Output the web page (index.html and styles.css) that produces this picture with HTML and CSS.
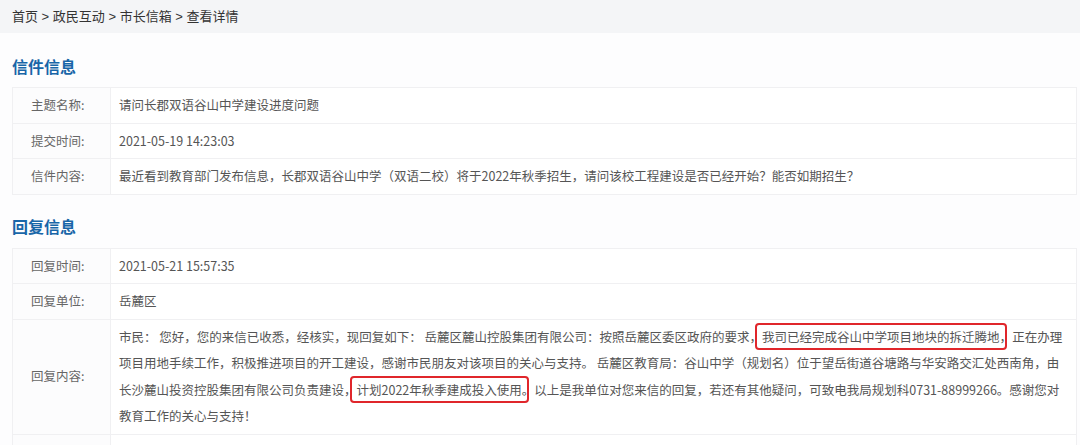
FILE: index.html
```html
<!DOCTYPE html>
<html lang="zh-CN">
<head>
<meta charset="utf-8">
<title>查看详情</title>
<link rel="stylesheet" href="styles.css">
</head>
<body>
<nav class="crumbs">首页 &gt; 政民互动 &gt; 市长信箱 &gt; 查看详情</nav>
<main class="main">
  <h2 class="sec-title">信件信息</h2>
  <table class="info">
    <tr><th>主题名称:</th><td>请问长郡双语谷山中学建设进度问题</td></tr>
    <tr><th>提交时间:</th><td>2021-05-19 14:23:03</td></tr>
    <tr><th>信件内容:</th><td>最近看到教育部门发布信息，长郡双语谷山中学（双语二校）将于2022年秋季招生，请问该校工程建设是否已经开始？能否如期招生？</td></tr>
  </table>
  <h2 class="sec-title">回复信息</h2>
  <table class="info">
    <tr><th>回复时间:</th><td>2021-05-21 15:57:35</td></tr>
    <tr><th>回复单位:</th><td>岳麓区</td></tr>
    <tr><th>回复内容:</th><td><div class="reply">市民： 您好，您的来信已收悉，经核实，现回复如下： 岳麓区麓山控股集团有限公司：按照岳麓区委区政府的要求，<span class="mark">我司已经完成谷山中学项目地块的拆迁腾地，</span>正在办理项目用地手续工作，积极推进项目的开工建设，感谢市民朋友对该项目的关心与支持。 岳麓区教育局：谷山中学（规划名）位于望岳街道谷塘路与华安路交汇处西南角，由长沙麓山投资控股集团有限公司负责建设，<span class="mark">计划2022年秋季建成投入使用。</span>以上是我单位对您来信的回复，若还有其他疑问，可致电我局规划科0731-88999266。感谢您对教育工作的关心与支持！</div></td></tr>
    <tr class="blank"><th></th><td></td></tr>
  </table>
</main>
</body>
</html>
```
FILE: styles.css
```css
* { box-sizing: border-box; }
html, body { margin: 0; padding: 0; }
body {
  background: #fdfdfe;
  font-family: "Noto Sans CJK SC", "Liberation Sans", sans-serif;
  color: #555;
  overflow: hidden;
}
.crumbs {
  height: 33px;
  line-height: 33px;
  padding-left: 12px;
  background: #f4f5f7;
  font-family: "Liberation Sans", "Noto Sans CJK SC", sans-serif;
  font-size: 13px;
  color: #333;
}
.main {
  padding: 0 3px 0 12px;
}
.sec-title {
  margin: 22px 0 10px;
  font-size: 16px;
  line-height: 22px;
  font-weight: bold;
  color: #1966a8;
}
.info + .sec-title {
  margin: 20px 0 11px;
}
.info {
  width: 100%;
  border-collapse: collapse;
  font-size: 12.5px;
  line-height: 26.5px;
}
.info th, .info td {
  border: 1px solid #f0f0f2;
  padding: 4px 8px;
  vertical-align: middle;
  text-align: left;
}
.info th {
  width: 98px;
  padding-left: 18px;
  font-weight: normal;
  color: #666;
  background: #fcfcfd;
}
.info td {
  color: #555;
  background: #fff;
}
.reply {
  width: 946px;
}
.mark {
  position: relative;
}
.mark::after {
  content: "";
  position: absolute;
  left: -7px;
  right: 5px;
  top: -4px;
  bottom: -4px;
  border: 2px solid #e0262b;
  border-radius: 4px;
  pointer-events: none;
}
.blank th, .blank td { height: 40px; }
```
